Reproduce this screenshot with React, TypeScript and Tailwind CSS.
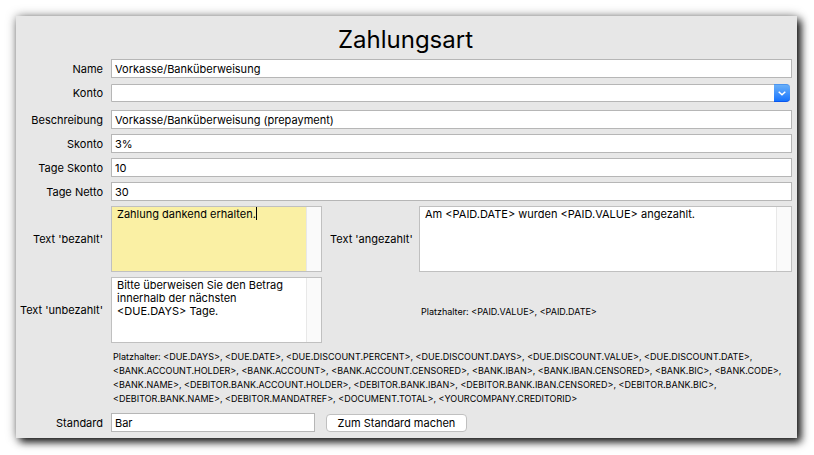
import { useState } from "react";
import type { ReactNode } from "react";

const fieldClass =
  "block h-[19px] w-full min-w-0 border border-[#b6b6b6] bg-white px-[3px] text-[11px] leading-[17px] text-black outline-none";

function Row({ id, label, children }: { id: string; label: string; children: ReactNode }) {
  return (
    <div className="flex items-center gap-2">
      <label htmlFor={id} className="w-[87px] shrink-0 text-right text-[11px] leading-4 whitespace-nowrap">
        {label}
      </label>
      <div className="min-w-0 grow">{children}</div>
    </div>
  );
}

function TextField({ id, label, initial }: { id: string; label: string; initial: string }) {
  const [value, setValue] = useState(initial);
  return (
    <Row id={id} label={label}>
      <input id={id} type="text" value={value} onChange={(e) => setValue(e.target.value)} className={fieldClass} />
    </Row>
  );
}

function TextBox({ id, initial, active = false }: { id: string; initial: string; active?: boolean }) {
  const [value, setValue] = useState(initial);
  return (
    <div className={`relative flex h-[66px] border border-[#c0c0c0] ${active ? "bg-[#faf0a4]" : "bg-white"}`}>
      <textarea
        id={id}
        value={value}
        onChange={(e) => setValue(e.target.value)}
        className="block h-full min-w-0 grow resize-none overflow-hidden bg-transparent pt-px pr-[5px] pl-[5px] text-[11px] leading-[13px] text-black outline-none"
      />
      {active && (
        <div className="pointer-events-none absolute top-0 left-[5px] flex h-[13px] text-[11px] leading-[13px] whitespace-pre">
          <span className="invisible" aria-hidden="true">{value}</span>
          <span className="w-px bg-black" />
        </div>
      )}
      <div className="w-[15px] shrink-0 border-l border-[#e8e8e8] bg-[#fafafa]" />
    </div>
  );
}

export default function App() {
  const [standard, setStandard] = useState("Bar");
  return (
    <div className="min-h-[455px] bg-white pt-4 pr-[17px] pb-[17px] pl-4 font-['Inter','Liberation_Sans',sans-serif] text-black">
      <form
        onSubmit={(e) => e.preventDefault()}
        className="bg-[#e7e7e7] pr-[5px] pb-[6px] shadow-[4px_4px_8px_rgba(0,0,0,0.9),0_0_10px_rgba(0,0,0,0.35)]"
      >
        <h1 className="pt-2 pb-[3px] pl-[3px] text-center text-[24px] leading-8">Zahlungsart</h1>
        <TextField id="name" label="Name" initial="Vorkasse/Banküberweisung" />
        <div className="pt-[6px] pb-2">
          <Row id="konto" label="Konto">
            <div className="relative mr-[2px]">
              <select
                id="konto"
                className="block h-[18px] w-full appearance-none rounded-r border border-[#b6b6b6] bg-white pl-[3px] text-[11px] leading-4 outline-none"
              >
                <option value=""></option>
              </select>
              <span className="pointer-events-none absolute inset-y-0 right-0 flex w-4 items-center justify-center rounded-r border-t border-b border-t-[#4a94f0] border-b-[#0a56ee] bg-linear-to-b from-[#68aff8] to-[#1473fd]">
                <svg width="8" height="5" viewBox="0 0 8 5" fill="none" stroke="white" strokeWidth="1.5" aria-hidden="true">
                  <path d="M0.7 0.8 L4 3.8 L7.3 0.8" />
                </svg>
              </span>
            </div>
          </Row>
        </div>
        <div className="flex flex-col gap-[5px]">
          <TextField id="beschreibung" label="Beschreibung" initial="Vorkasse/Banküberweisung (prepayment)" />
          <TextField id="skonto" label="Skonto" initial="3%" />
          <TextField id="tage-skonto" label="Tage Skonto" initial="10" />
          <TextField id="tage-netto" label="Tage Netto" initial="30" />
          <div className="grid grid-cols-[87px_211px_81px_1fr] items-center gap-x-2 gap-y-[5px] text-right text-[11px] leading-4 whitespace-nowrap">
            <label htmlFor="bezahlt">Text 'bezahlt'</label>
            <TextBox id="bezahlt" initial="Zahlung dankend erhalten." active />
            <label htmlFor="angezahlt">Text 'angezahlt'</label>
            <TextBox id="angezahlt" initial="Am <PAID.DATE> wurden <PAID.VALUE> angezahlt." />
            <label htmlFor="unbezahlt">Text 'unbezahlt'</label>
            <TextBox id="unbezahlt" initial="Bitte überweisen Sie den Betrag innerhalb der nächsten <DUE.DAYS> Tage." />
            <p className="col-start-4 pt-1 pl-[2px] text-left text-[9px] leading-[14px]">
              {"Platzhalter: <PAID.VALUE>, <PAID.DATE>"}
            </p>
          </div>
        </div>
        <p className="mt-[7px] mb-[7px] ml-[97px] text-[9px] leading-[14px]">
          {"Platzhalter: <DUE.DAYS>, <DUE.DATE>, <DUE.DISCOUNT.PERCENT>, <DUE.DISCOUNT.DAYS>, <DUE.DISCOUNT.VALUE>, <DUE.DISCOUNT.DATE>,"}
          <br />
          {"<BANK.ACCOUNT.HOLDER>, <BANK.ACCOUNT>, <BANK.ACCOUNT.CENSORED>, <BANK.IBAN>, <BANK.IBAN.CENSORED>, <BANK.BIC>, <BANK.CODE>,"}
          <br />
          {"<BANK.NAME>, <DEBITOR.BANK.ACCOUNT.HOLDER>, <DEBITOR.BANK.IBAN>, <DEBITOR.BANK.IBAN.CENSORED>, <DEBITOR.BANK.BIC>,"}
          <br />
          {"<DEBITOR.BANK.NAME>, <DEBITOR.MANDATREF>, <DOCUMENT.TOTAL>, <YOURCOMPANY.CREDITORID>"}
        </p>
        <Row id="standard" label="Standard">
          <div className="flex items-center gap-[11px]">
            <div className="w-[204px]">
              <input id="standard" type="text" value={standard} onChange={(e) => setStandard(e.target.value)} className={fieldClass} />
            </div>
            <button
              type="button"
              className="h-[18px] w-[141px] rounded border border-[#c0c0c0] bg-white text-[11px] leading-4 whitespace-nowrap"
            >
              Zum Standard machen
            </button>
          </div>
        </Row>
      </form>
    </div>
  );
}
